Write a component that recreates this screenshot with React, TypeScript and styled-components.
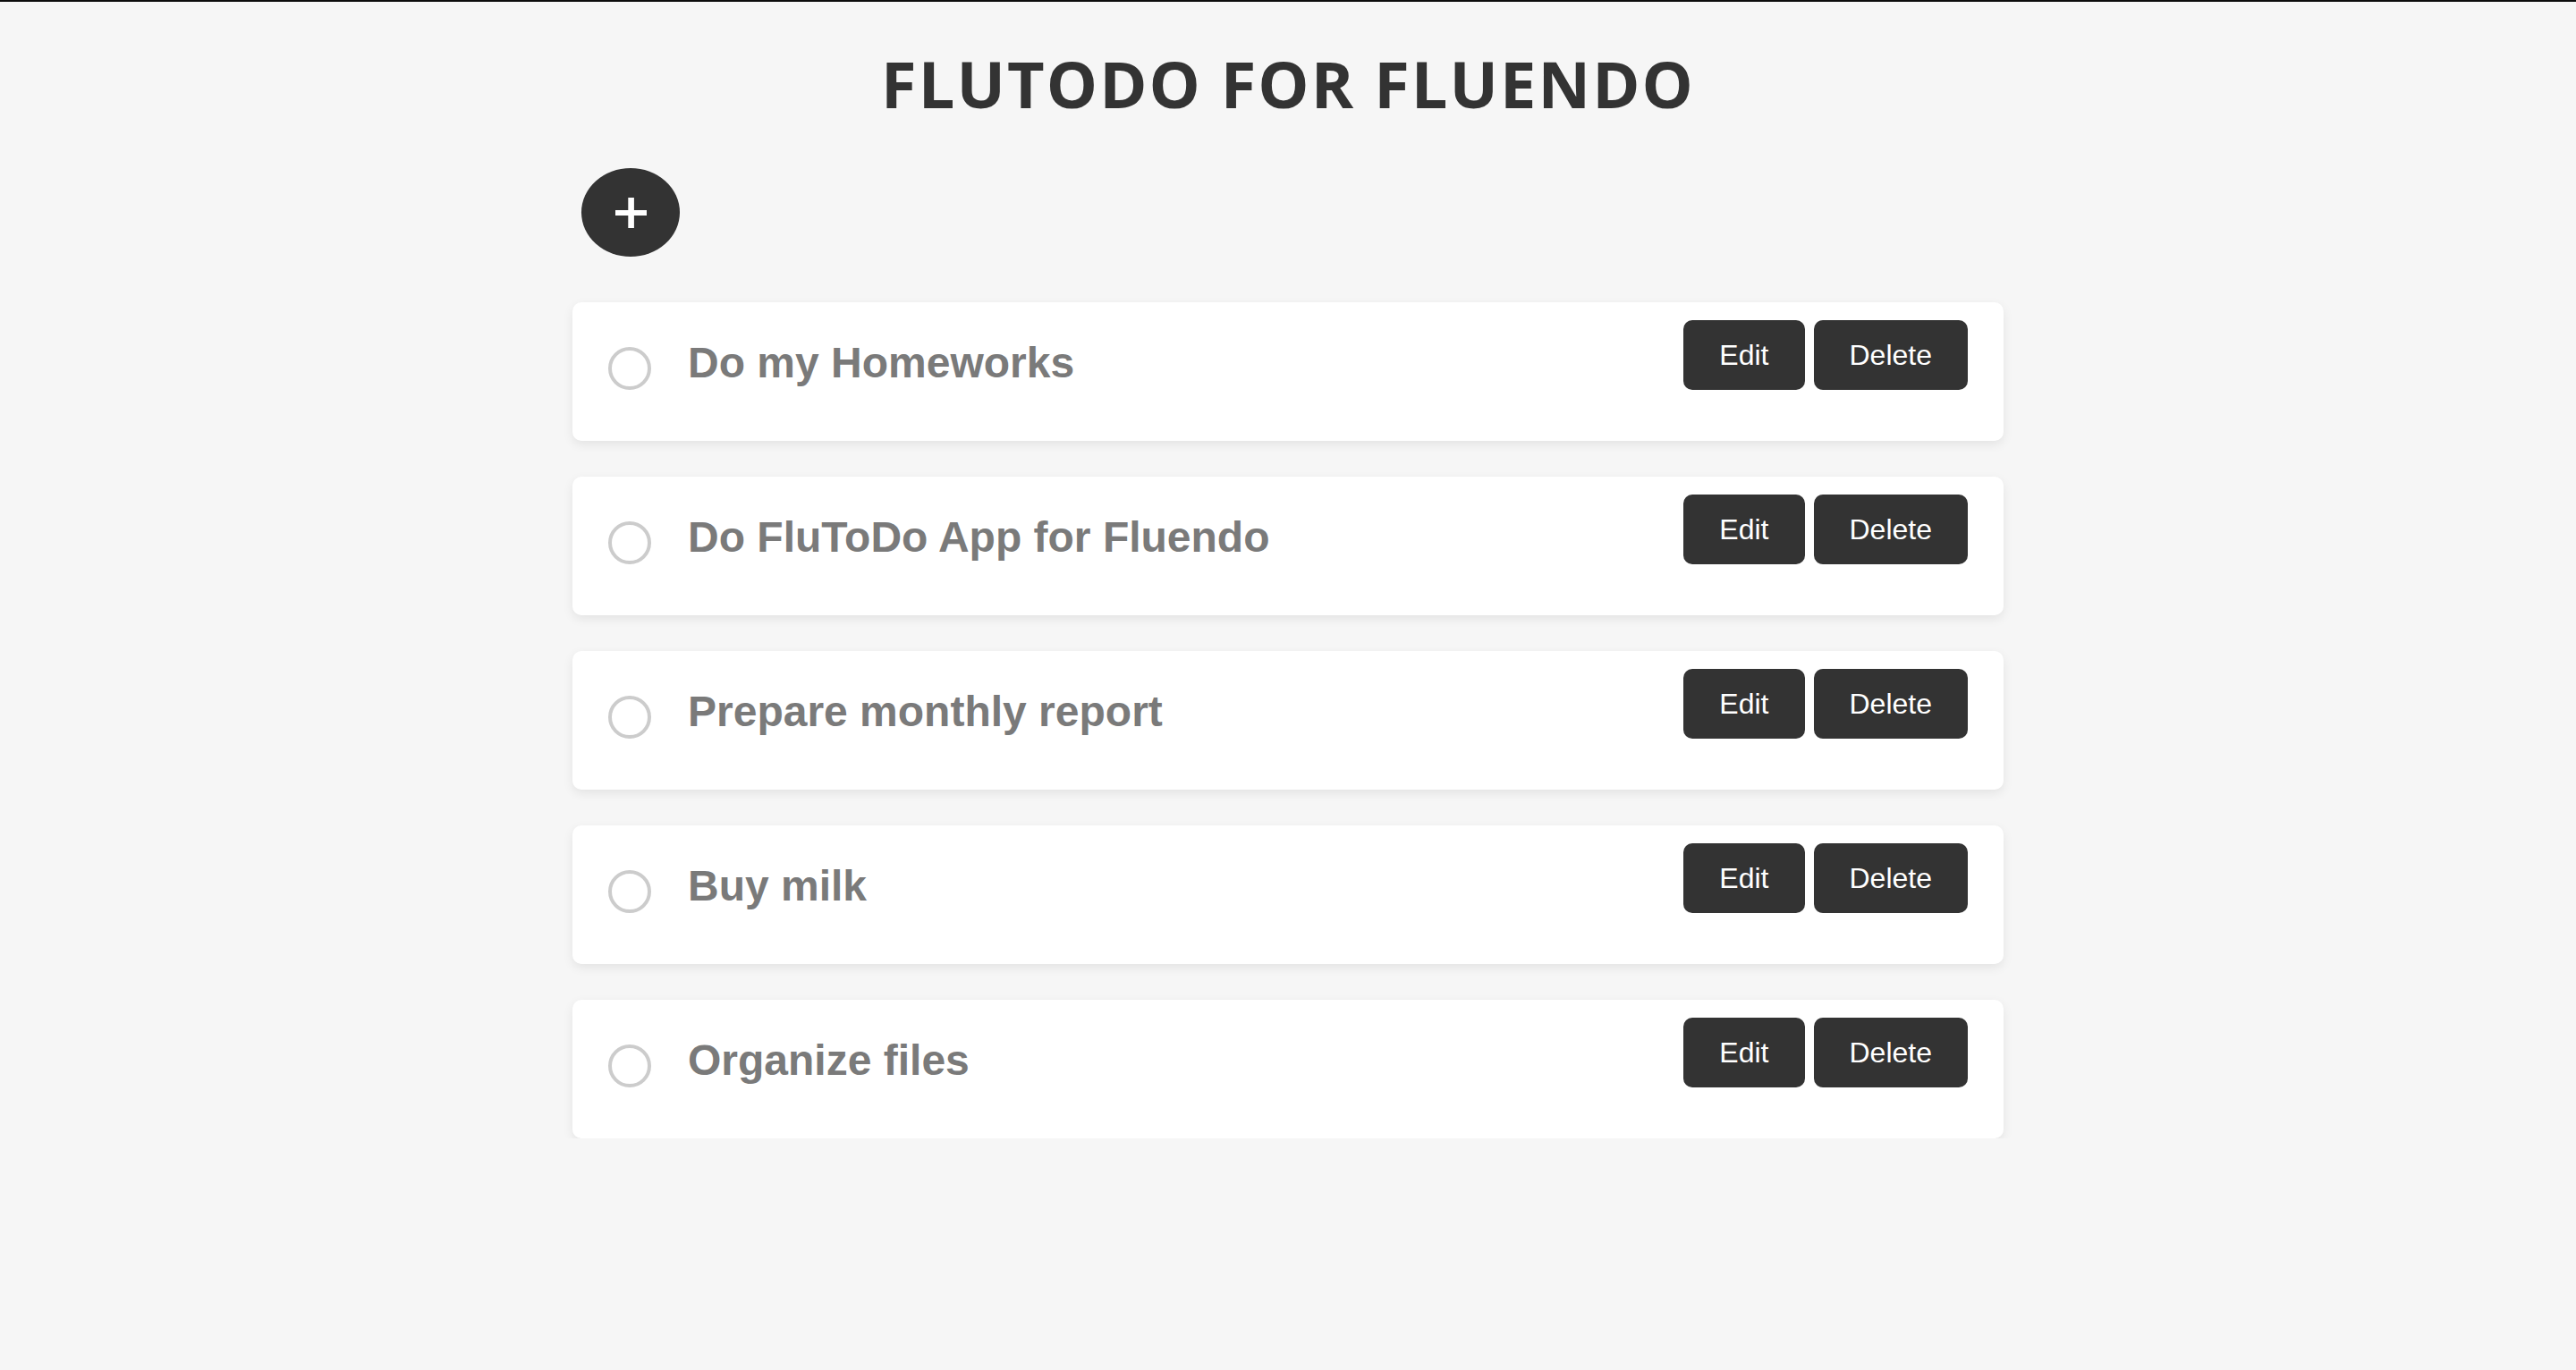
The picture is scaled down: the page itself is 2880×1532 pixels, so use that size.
import React from "react";
import styled, { createGlobalStyle } from "styled-components";

const GlobalStyle = createGlobalStyle`
  html, body {
    margin: 0;
    padding: 0;
    background: #f6f6f6;
  }
  body {
    border-top: 2px solid #0d0d0d;
    font-family: "Liberation Sans", Arial, sans-serif;
  }
`;

const Page = styled.main`
  width: 1600px;
  margin: 0 auto;
  display: flex;
  flex-direction: column;
`;

const Title = styled.h1`
  margin: 42px 0 46px;
  font-family: "Open Sans", "Liberation Sans", sans-serif;
  font-weight: 700;
  font-size: 72px;
  line-height: 98px;
  letter-spacing: 2.1px;
  text-align: center;
  color: #333333;
  text-transform: uppercase;
`;

const AddButton = styled.button`
  align-self: flex-start;
  margin: 0 0 51px 10px;
  width: 110px;
  height: 99px;
  border: none;
  border-radius: 50%;
  background: #333333;
  display: flex;
  align-items: center;
  justify-content: center;
  padding: 0;
  cursor: pointer;
`;

const List = styled.ul`
  list-style: none;
  margin: 0;
  padding: 0;
  display: flex;
  flex-direction: column;
  gap: 40px;
`;

const Card = styled.li`
  display: flex;
  justify-content: space-between;
  align-items: flex-start;
  padding: 20px 40px 57px 40px;
  background: #ffffff;
  border-radius: 10px;
  box-shadow: 0 4px 12px rgba(0, 0, 0, 0.08);
`;

const TaskMain = styled.div`
  display: flex;
  align-items: flex-start;
  gap: 41px;
  margin-top: 20px;
`;

const Check = styled.span`
  box-sizing: border-box;
  width: 48px;
  height: 48px;
  margin-top: 10px;
  border: 4px solid #cccccc;
  border-radius: 50%;
  flex: none;
`;

const TaskTitle = styled.h3`
  margin: 0;
  font-family: "Liberation Sans", Arial, sans-serif;
  font-weight: 700;
  font-size: 48px;
  line-height: 55px;
  color: #7a7a7a;
`;

const Actions = styled.div`
  display: flex;
  gap: 10px;
`;

const ActionButton = styled.button`
  padding: 20px 40px;
  border: none;
  border-radius: 10px;
  background: #333333;
  color: #ffffff;
  font-family: "Liberation Sans", Arial, sans-serif;
  font-size: 32px;
  line-height: 38px;
  cursor: pointer;
`;

const PlusIcon = () => (
  <svg width="35" height="34" viewBox="0 0 35 34" aria-hidden="true">
    <rect x="0" y="14" width="35" height="6" fill="#ffffff" />
    <rect x="14.3" y="0" width="6.6" height="34" fill="#ffffff" />
  </svg>
);

const tasks = [
  "Do my Homeworks",
  "Do FluToDo App for Fluendo",
  "Prepare monthly report",
  "Buy milk",
  "Organize files",
];

export default function App() {
  return (
    <>
      <GlobalStyle />
      <Page>
        <Title>FluToDo for Fluendo</Title>
        <AddButton aria-label="Add task">
          <PlusIcon />
        </AddButton>
        <List>
          {tasks.map((t) => (
            <Card key={t}>
              <TaskMain>
                <Check />
                <TaskTitle>{t}</TaskTitle>
              </TaskMain>
              <Actions>
                <ActionButton>Edit</ActionButton>
                <ActionButton>Delete</ActionButton>
              </Actions>
            </Card>
          ))}
        </List>
      </Page>
    </>
  );
}
